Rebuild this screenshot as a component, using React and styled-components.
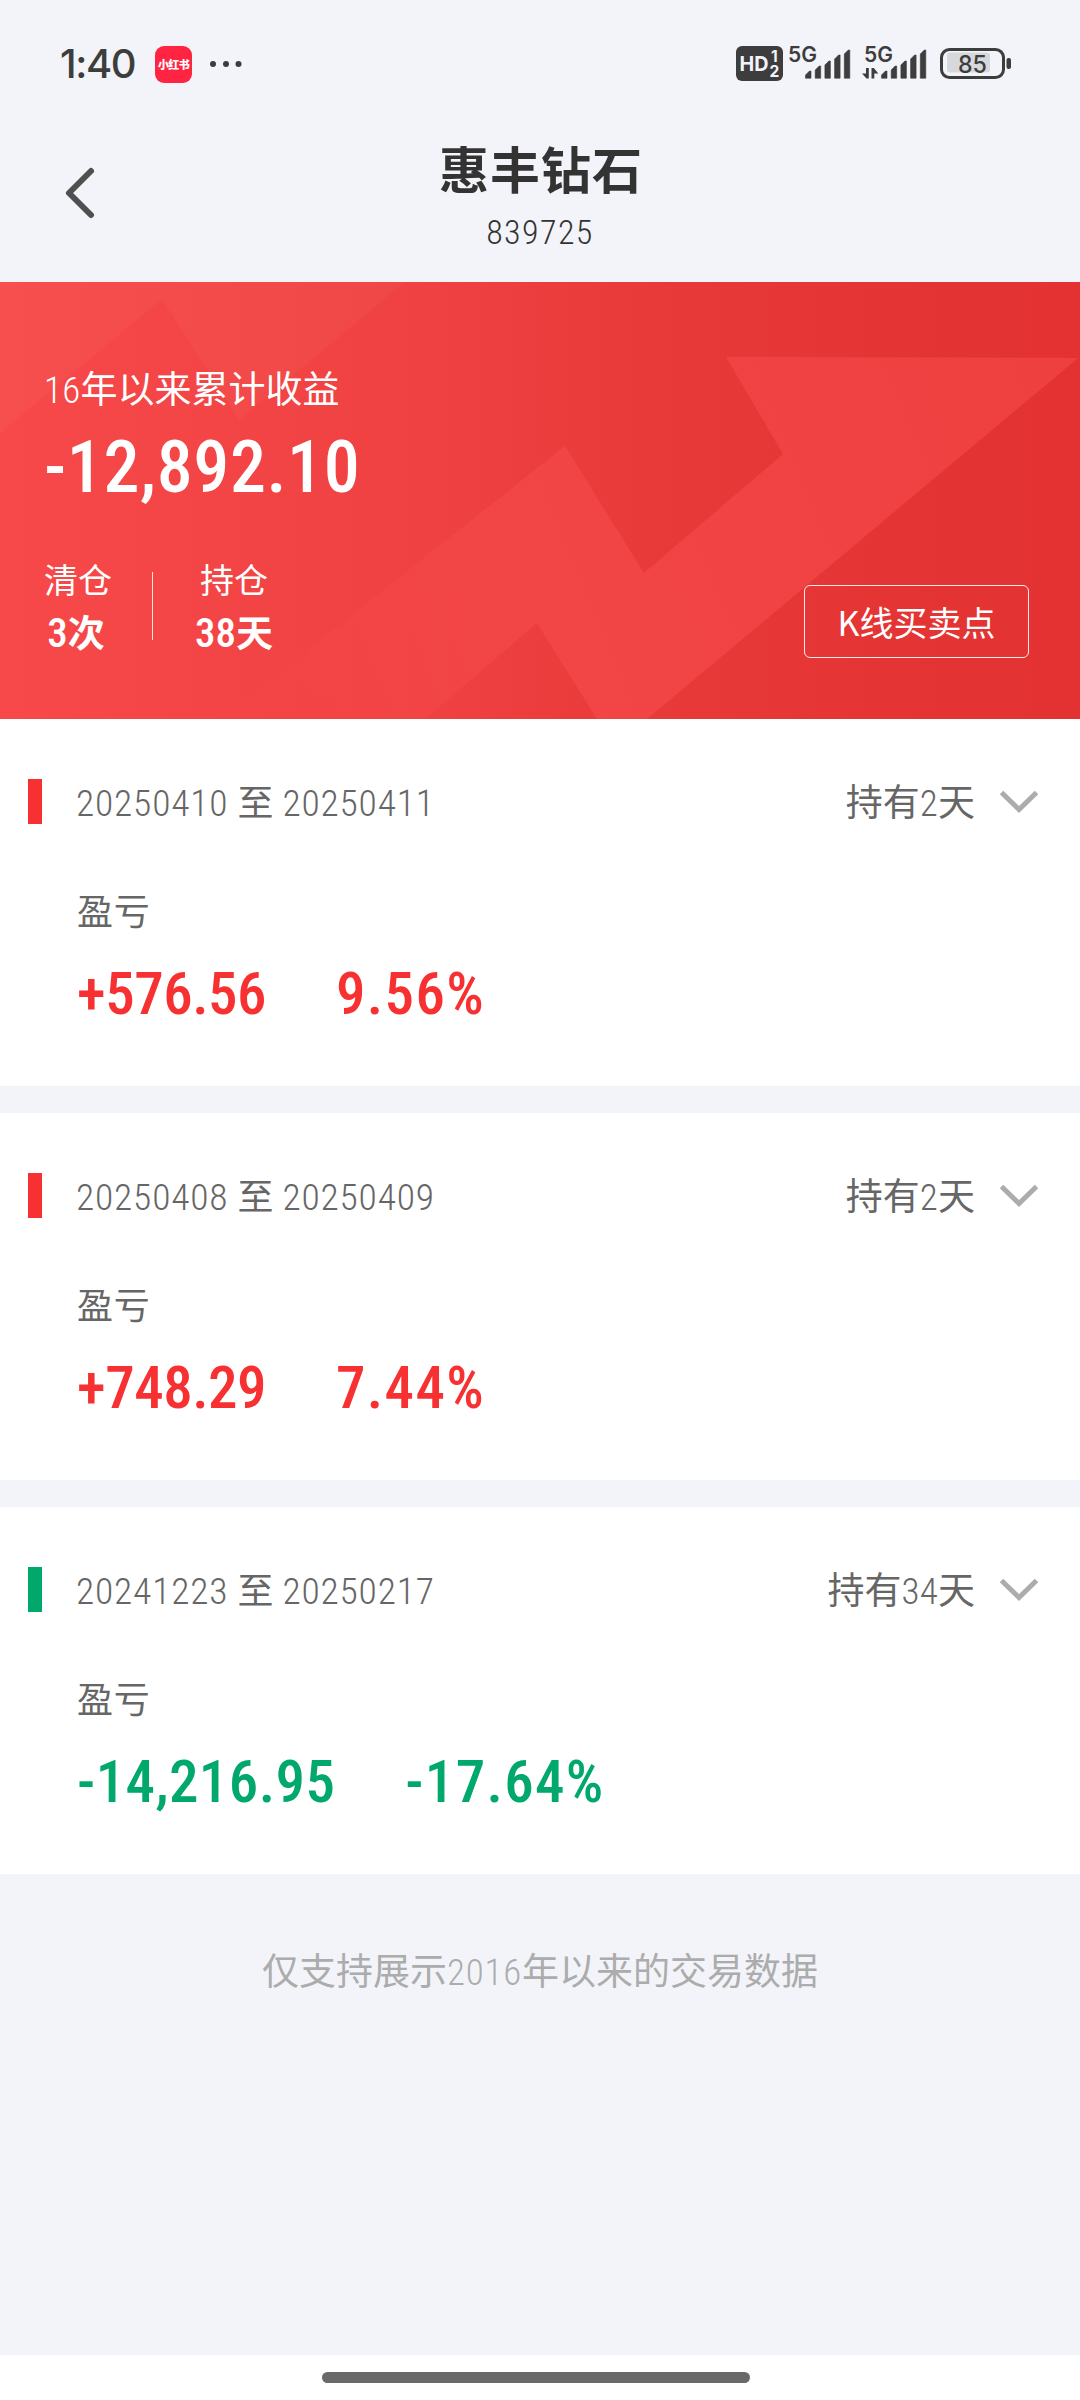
import { Fragment } from 'react';
import styled, { createGlobalStyle } from 'styled-components';

const GlobalStyle = createGlobalStyle`
  * {
    box-sizing: border-box;
  }

  body {
    margin: 0;
    background: #f3f4f9;
    font-family: 'Noto Sans CJK SC', sans-serif;
    color: #333;
  }
`;

const Page = styled.div`
  width: 1080px;
  height: 2400px;
  display: flex;
  flex-direction: column;
  overflow: hidden;
  white-space: nowrap;
`;

const StatusBar = styled.header`
  height: 128px;
  padding: 0 69px 0 60px;
  display: flex;
  align-items: center;
  justify-content: space-between;
`;

const StatusLeft = styled.div`
  display: flex;
  align-items: center;
`;

const Clock = styled.span`
  width: 95px;
  font-family: Inter, sans-serif;
  font-size: 40px;
  font-weight: 500;
  line-height: 40px;
  letter-spacing: -1.4px;
  color: #3d3d3d;
`;

const AppBadge = styled.span`
  width: 37px;
  height: 37px;
  border-radius: 9px;
  margin-right: 18px;
  background: #ff2442;
  color: #fff;
  font-size: 11px;
  font-weight: 900;
  line-height: 36px;
  letter-spacing: -0.6px;
  text-align: center;
`;

const StatusIcons = styled.svg`
  display: block;

  text {
    font-family: Inter, sans-serif;
  }
`;

const NavBar = styled.nav`
  height: 154px;
  padding: 0 60px;
  display: grid;
  grid-template-columns: 60px 1fr 60px;
`;

const BackButton = styled.button`
  width: 40px;
  height: 132px;
  padding: 0;
  border: 0;
  background: none;
`;

const Heading = styled.div`
  display: flex;
  flex-direction: column;
  align-items: center;
`;

const Title = styled.h1`
  margin: 3px 0 0 2px;
  font-size: 50px;
  font-weight: 700;
  line-height: 72px;
  letter-spacing: 1px;
`;

const Num = styled.span`
  font-family: Roboto, sans-serif;
  font-size: ${({ $size }) => $size}px;
  font-weight: ${({ $weight }) => $weight || 340};
  font-stretch: 87%;
  letter-spacing: ${({ $track }) => $track ?? 0.8}px;
`;

const Code = styled.div`
  line-height: 50px;
  margin-top: 4px;
`;

const Hero = styled.section`
  position: relative;
  height: 437px;
  padding: 78px 51px 0 44px;
  background: linear-gradient(90deg, #f74949 0%, #ef4141 40%, #e93a3a 60%, #e43434 82%, #e43232 100%);
  color: #fff;
`;

const HeroArt = styled.svg`
  position: absolute;
  inset: 0;
`;

const HeroBody = styled.div`
  position: relative;
`;

const HeroLabel = styled.div`
  font-size: 37px;
  line-height: 54px;
`;

const HeroAmount = styled.div`
  line-height: 100px;
`;

const HeroFooter = styled.div`
  display: flex;
  align-items: flex-start;
  justify-content: space-between;
`;

const Stats = styled.div`
  display: flex;
  align-items: flex-start;
  margin-top: 19px;
`;

const Stat = styled.div`
  width: ${({ $width }) => $width}px;
  text-align: center;
`;

const StatLabel = styled.div`
  font-size: 34px;
  line-height: 50px;
`;

const StatValue = styled.div`
  font-size: 37px;
  font-weight: 600;
  line-height: 54px;
`;

const Divider = styled.div`
  width: 1px;
  height: 68px;
  margin: 18px 42px 0 44px;
  background: rgba(255, 255, 255, 0.85);
`;

const OutlineButton = styled.button`
  width: 225px;
  height: 73px;
  margin-top: 50px;
  padding: 0;
  border: 1px solid rgba(255, 255, 255, 0.9);
  border-radius: 6px;
  background: none;
  color: #fff;
  font: inherit;
  font-size: 34px;
  line-height: 70px;
`;

const Card = styled.article`
  height: 367px;
  margin-bottom: 27px;
  padding: 60px 42px 0 28px;
  background: #fff;
  color: #666;
`;

const CardHeader = styled.div`
  display: flex;
  align-items: center;
  height: 45px;
`;

const Marker = styled.span`
  width: 14px;
  height: 45px;
  background: ${({ $color }) => $color};
`;

const Period = styled.div`
  flex: 1;
  margin-left: 34px;
  font-size: 36px;
  line-height: 50px;
  word-spacing: 1px;
`;

const Held = styled.div`
  margin-right: 25px;
  font-size: 37px;
  line-height: 50px;
`;

const CardBody = styled.div`
  padding: 58px 0 0 49px;
`;

const ProfitLabel = styled.div`
  font-size: 36px;
  line-height: 54px;
  letter-spacing: 0.8px;
`;

const Figures = styled.div`
  display: flex;
  gap: 70px;
  margin-top: 18px;
  line-height: 80px;
  color: ${({ $color }) => $color};
`;

const Footnote = styled.p`
  flex: 1;
  margin: 41px 0 0;
  font-size: 37px;
  line-height: 54px;
  text-align: center;
  color: #acacac;
`;

const HomeBar = styled.footer`
  height: 45px;
  padding: 17px 0 0 322px;
  background: #fff;
`;

const HomeIndicator = styled.div`
  width: 428px;
  height: 11px;
  border-radius: 6px;
  background: #696969;
`;

const RED = '#f73131';
const GREEN = '#00a86b';

const trades = [
  { from: '20250410', to: '20250411', days: 2, profit: '+576.56', rate: '9.56%' },
  { from: '20250408', to: '20250409', days: 2, profit: '+748.29', rate: '7.44%' },
  { from: '20241223', to: '20250217', days: 34, profit: '-14,216.95', rate: '-17.64%' },
];

const barTops = [25, 20, 15, 9, 4];

function SignalBars({ x }) {
  return barTops.map((top, i) => {
    const left = x + i * 9.7;
    return (
      <path
        key={top}
        d={`M${left} ${top + 4}L${left + 4} ${top}H${left + 5.5}V32.2H${left}Z`}
        stroke="#3d3d3d"
        strokeWidth="0.6"
        strokeLinejoin="round"
      />
    );
  });
}

function StatusIndicators() {
  return (
    <StatusIcons width="275" height="56" viewBox="0 -10 275 56" fill="#3d3d3d">
      <rect width="47" height="35" rx="6" />
      <text x="3.5" y="25" fontSize="20.5" fontWeight="700" fill="#f3f4f9" textLength="29" lengthAdjust="spacingAndGlyphs">
        HD
      </text>
      <text x="35" y="15.5" fontSize="15.5" fontWeight="700" fill="#f3f4f9">1</text>
      <text x="33.5" y="30.5" fontSize="15.5" fontWeight="700" fill="#f3f4f9">2</text>
      <text x="52" y="15.5" fontSize="21" fontWeight="600" textLength="29" lengthAdjust="spacingAndGlyphs">5G</text>
      <SignalBars x={69.5} />
      <text x="128" y="15.5" fontSize="21" fontWeight="600" textLength="29" lengthAdjust="spacingAndGlyphs">5G</text>
      <path d="M130 22h2.800v10.500h-2.300l-4.500-5h4zM135.500 32.500V22h2.300l4.500 5.500h-4v5z" />
      <SignalBars x={145.5} />
      <rect x="211" y="6.5" width="43" height="20" rx="3" fill="#d7d8dc" />
      <rect x="205.5" y="3.5" width="62" height="28" rx="8" fill="none" stroke="#3d3d3d" strokeWidth="3" />
      <rect x="270.5" y="12" width="4.5" height="11" rx="2" />
      <text x="236.5" y="26.5" fontSize="24" fontWeight="500" textAnchor="middle" textLength="29" lengthAdjust="spacingAndGlyphs">
        85
      </text>
    </StatusIcons>
  );
}

function TradeCard({ trade }) {
  const isLoss = trade.profit.startsWith('-');
  const color = isLoss ? GREEN : RED;

  return (
    <Card>
      <CardHeader>
        <Marker $color={color} />
        <Period>
          <Num $size={37.5}>{trade.from}</Num> 至 <Num $size={37.5}>{trade.to}</Num>
        </Period>
        <Held>
          持有<Num $size={37} $track={0.3}>{trade.days}</Num>天
        </Held>
        <svg width="38" height="24" viewBox="0 0 38 24" fill="none" stroke="#acacac" strokeWidth="5">
          <path d="M1.5 2.5L19 19.5L36.5 2.5" />
        </svg>
      </CardHeader>
      <CardBody>
        <ProfitLabel>盈亏</ProfitLabel>
        <Figures $color={color}>
          <Num $size={59} $weight={540} $track={isLoss ? 0.4 : -0.5}>{trade.profit}</Num>
          <Num $size={59} $weight={540} $track={1.3}>{trade.rate}</Num>
        </Figures>
      </CardBody>
    </Card>
  );
}

function App() {
  return (
    <Fragment>
      <GlobalStyle />
      <Page>
        <StatusBar>
          <StatusLeft>
            <Clock>1:40</Clock>
            <AppBadge>小红书</AppBadge>
            <svg width="32" height="6" fill="#3d3d3d">
              <circle cx="3" cy="3" r="3" />
              <circle cx="16" cy="3" r="3" />
              <circle cx="28.5" cy="3" r="3" />
            </svg>
          </StatusLeft>
          <StatusIndicators />
        </StatusBar>

        <NavBar>
          <BackButton aria-label="返回">
            <svg width="40" height="56" fill="none" stroke="#4f4f4f" strokeWidth="6" strokeLinecap="round" strokeLinejoin="round">
              <path d="M31 6L9 28L31 50" />
            </svg>
          </BackButton>
          <Heading>
            <Title>惠丰钻石</Title>
            <Code>
              <Num $size={34} $track={1.4}>839725</Num>
            </Code>
          </Heading>
        </NavBar>

        <Hero>
          <HeroArt width="1080" height="437" viewBox="0 0 1080 437">
            <defs>
              <linearGradient id="rise" x1="220" y1="437" x2="1078" y2="76" gradientUnits="userSpaceOnUse">
                <stop offset="0" stopColor="#f74949" stopOpacity="0" />
                <stop offset="0.35" stopColor="#f24545" />
                <stop offset="1" stopColor="#ef4040" />
              </linearGradient>
            </defs>
            <path d="M0 0H405L239 138L162 17L0 151Z" fill="#fff" fillOpacity="0.03" />
            <path
              d="M221 437L565 164L644 291L783 172L726 75L1078 76L647 437H597L537 341L425 437Z"
              fill="url(#rise)"
            />
          </HeroArt>
          <HeroBody>
            <HeroLabel>
              <Num $size={37} $track={0.3}>16</Num>年以来累计收益
            </HeroLabel>
            <HeroAmount>
              <Num $size={72} $weight={540} $track={0.6}>-12,892.10</Num>
            </HeroAmount>
            <HeroFooter>
              <Stats>
                <Stat $width={64}>
                  <StatLabel>清仓</StatLabel>
                  <StatValue>
                    <Num $size={41} $weight={540} $track={0}>3</Num>次
                  </StatValue>
                </Stat>
                <Divider />
                <Stat $width={78}>
                  <StatLabel>持仓</StatLabel>
                  <StatValue>
                    <Num $size={41} $weight={540} $track={0}>38</Num>天
                  </StatValue>
                </Stat>
              </Stats>
              <OutlineButton>K线买卖点</OutlineButton>
            </HeroFooter>
          </HeroBody>
        </Hero>

        {trades.map(trade => (
          <TradeCard key={trade.from} trade={trade} />
        ))}

        <Footnote>
          仅支持展示<Num $size={37}>2016</Num>年以来的交易数据
        </Footnote>

        <HomeBar>
          <HomeIndicator />
        </HomeBar>
      </Page>
    </Fragment>
  );
}

export default App;
